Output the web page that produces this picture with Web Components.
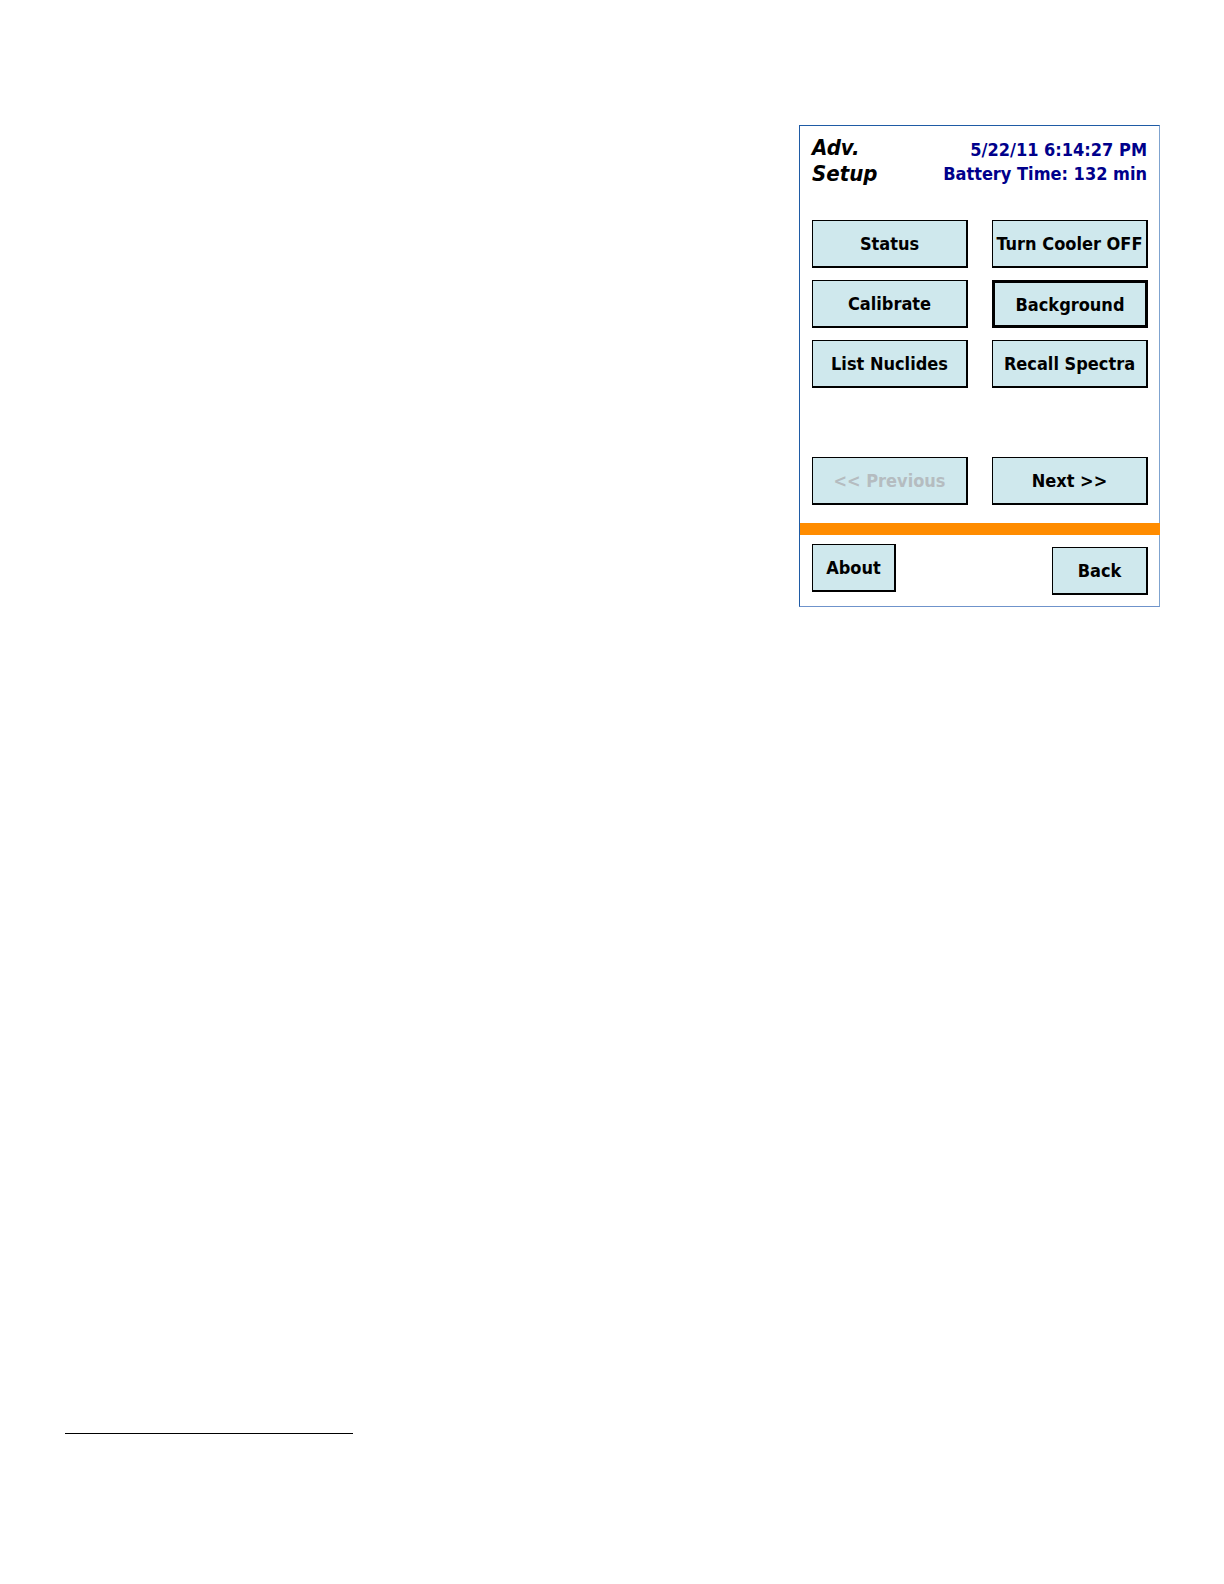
<!DOCTYPE html>
<html lang="en">
<head>
  <meta charset="utf-8">
  <title>Adv. Setup</title>
  <style>
    body {
      margin: 0;
      background: #fff;
      color: #000;
      font-family: Tahoma, "DejaVu Sans Condensed", "Noto Sans", sans-serif;
      font-size: 18px;
      font-weight: bold;
    }
  </style>
</head>
<body>
  <manual-page>
    <device-screen>
      <screen-header slot="header" time="5/22/11 6:14:27 PM" battery="132">Adv. Setup</screen-header>
      <button-grid>
        <menu-button>Status</menu-button>
        <menu-button>Turn Cooler OFF</menu-button>
        <menu-button>Calibrate</menu-button>
        <menu-button selected>Background</menu-button>
        <menu-button>List Nuclides</menu-button>
        <menu-button>Recall Spectra</menu-button>
      </button-grid>
      <button-grid>
        <menu-button disabled>&lt;&lt; Previous</menu-button>
        <menu-button>Next &gt;&gt;</menu-button>
      </button-grid>
      <screen-footer slot="footer">
        <menu-button slot="left">About</menu-button>
        <menu-button slot="right">Back</menu-button>
      </screen-footer>
    </device-screen>
  </manual-page>

  <script>
    class ManualPage extends HTMLElement {
      constructor() {
        super();
        this.attachShadow({ mode: 'open' });
        this.shadowRoot.innerHTML = `
          <style>
            :host {
              display: flex;
              flex-direction: column;
              justify-content: space-between;
              box-sizing: border-box;
              min-height: 100vh;
              padding: 125px 64px 150px 65px;
            }
            main {
              display: flex;
              justify-content: flex-end;
            }
            hr {
              width: 288px;
              margin: 0;
              border: 0;
              border-top: 1px solid #000;
            }
          </style>
          <main><slot></slot></main>
          <hr>
        `;
      }
    }

    class DeviceScreen extends HTMLElement {
      constructor() {
        super();
        this.attachShadow({ mode: 'open' });
        this.shadowRoot.innerHTML = `
          <style>
            :host {
              display: block;
              border: 1px solid #1f5ba5;
              border-right-color: #7fa3cf;
              border-bottom-color: #6f93cb;
            }
            .body {
              display: flex;
              flex-direction: column;
              gap: 69px;
              padding: 24px 11px 18px 12px;
            }
            .bar {
              height: 12px;
              margin-right: -1px;
              background: #ff8c00;
            }
          </style>
          <slot name="header"></slot>
          <div class="body"><slot></slot></div>
          <div class="bar"></div>
          <slot name="footer"></slot>
        `;
      }
    }

    class ScreenHeader extends HTMLElement {
      constructor() {
        super();
        this.attachShadow({ mode: 'open' });
      }

      connectedCallback() {
        this.shadowRoot.innerHTML = `
          <style>
            :host {
              display: flex;
              justify-content: space-between;
              padding: 9px 12px;
            }
            h1 {
              width: min-content;
              margin: 0;
              font-size: 22px;
              font-style: italic;
              line-height: 26px;
            }
            .info {
              padding-top: 3px;
              color: #00008b;
              line-height: 24px;
              text-align: right;
            }
          </style>
          <h1><slot></slot></h1>
          <div class="info">
            <div>${this.getAttribute('time')}</div>
            <div>Battery Time: ${this.getAttribute('battery')} min</div>
          </div>
        `;
      }
    }

    class ButtonGrid extends HTMLElement {
      constructor() {
        super();
        this.attachShadow({ mode: 'open' });
        this.shadowRoot.innerHTML = `
          <style>
            :host {
              display: grid;
              grid-template-columns: 156px 156px;
              gap: 12px 24px;
            }
          </style>
          <slot></slot>
        `;
      }
    }

    class ScreenFooter extends HTMLElement {
      constructor() {
        super();
        this.attachShadow({ mode: 'open' });
        this.shadowRoot.innerHTML = `
          <style>
            :host {
              display: flex;
              justify-content: space-between;
              padding: 9px 11px 11px 12px;
            }
            .left { width: 84px; }
            .right {
              width: 96px;
              padding-top: 3px;
            }
          </style>
          <div class="left"><slot name="left"></slot></div>
          <div class="right"><slot name="right"></slot></div>
        `;
      }
    }

    class MenuButton extends HTMLElement {
      constructor() {
        super();
        this.attachShadow({ mode: 'open' });
        this.shadowRoot.innerHTML = `
          <style>
            :host { display: block; }
            button {
              display: block;
              box-sizing: border-box;
              width: 100%;
              height: 48px;
              padding: 0;
              border: 1px solid #000;
              border-width: 1px 2px 2px 1px;
              border-radius: 0;
              background: #cfe8ed;
              color: #000;
              font: inherit;
              white-space: nowrap;
            }
            :host([selected]) button { border-width: 3px; }
            button:disabled { color: #b5bcc0; }
          </style>
          <button type="button"><slot></slot></button>
        `;
      }

      connectedCallback() {
        this.shadowRoot.querySelector('button').disabled = this.hasAttribute('disabled');
      }
    }

    customElements.define('manual-page', ManualPage);
    customElements.define('device-screen', DeviceScreen);
    customElements.define('screen-header', ScreenHeader);
    customElements.define('button-grid', ButtonGrid);
    customElements.define('screen-footer', ScreenFooter);
    customElements.define('menu-button', MenuButton);
  </script>
</body>
</html>
